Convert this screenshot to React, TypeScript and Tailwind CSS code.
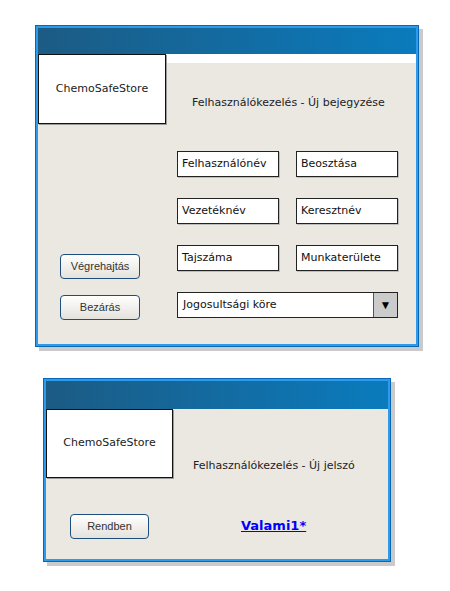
const sketch = { fontFamily: '"DejaVu Sans", "Liberation Sans", sans-serif' };
const ui = { fontFamily: '"Liberation Sans", Arial, sans-serif' };

function TitleBar({ h }: { h: string }) {
  return <div className={`${h} bg-[linear-gradient(90deg,#1c5b84,#0a7bbd)]`} />;
}

function Logo({ w, h }: { w: string; h: string }) {
  return (
    <div
      className={`${w} ${h} shrink-0 bg-white border border-[#111] shadow-[1px_1px_0_#9a9a9a] flex items-center justify-center text-[11px] text-[#222]`}
      style={sketch}>
      ChemoSafeStore
    </div>
  );
}

function Field({ label }: { label: string }) {
  return (
    <div
      className="h-[26px] bg-white border border-[#222] shadow-[1px_1px_0_#bdbdbd] flex items-center pl-[4px] text-[11px] text-[#111]"
      style={sketch}>
      {label}
    </div>
  );
}

function Button({ label, w }: { label: string; w: string }) {
  return (
    <button
      type="button"
      className={`${w} h-[25px] rounded-[4px] border border-[#1d4e7e] bg-[linear-gradient(#ffffff,#e4e2dc)] text-[11px] text-[#333]`}
      style={ui}>
      {label}
    </button>
  );
}

export default function App() {
  return (
    <div className="w-[450px] h-[591px] bg-white pt-[25px]">
      {/* uj bejegyzes */}
      <div className="ml-[35px] w-[384px] h-[322px] border border-[#0b66b6] shadow-[4px_4px_0_#cacaca]">
        <div className="h-full border-2 border-[#2d9bec] flex flex-col">
          <TitleBar h="h-[26px]" />
          <div className="flex-1 flex bg-[linear-gradient(#ffffff_0,#ffffff_9px,#ebe8e2_9px)]">
            <div className="w-[128px] flex flex-col">
              <Logo w="w-[128px]" h="h-[70px]" />
              <div className="ml-[22px] mt-[130px] flex flex-col gap-[16px]">
                <Button label="Végrehajtás" w="w-[80px]" />
                <Button label="Bezárás" w="w-[80px]" />
              </div>
            </div>
            <div className="ml-[11px] pt-[42px] flex flex-col">
              <div className="ml-[15px] h-[14px] leading-[14px] text-[11px] text-[#222]" style={sketch}>
                Felhasználókezelés - Új bejegyzése
              </div>
              <div className="mt-[41px] grid grid-cols-[102px_102px] gap-x-[17px] gap-y-[21px]">
                <Field label="Felhasználónév" />
                <Field label="Beosztása" />
                <Field label="Vezetéknév" />
                <Field label="Keresztnév" />
                <Field label="Tajszáma" />
                <Field label="Munkaterülete" />
                <div className="col-span-2 h-[26px] bg-white border border-[#222] flex items-stretch">
                  <div className="flex-1 flex items-center pl-[5px] text-[11px] text-[#111]" style={sketch}>
                    Jogosultsági köre
                  </div>
                  <div className="w-[24px] bg-[#cbcbcb] border-l border-[#555] flex items-center justify-center text-[12px] text-black">
                    ▼
                  </div>
                </div>
              </div>
            </div>
          </div>
        </div>
      </div>

      {/* uj jelszo */}
      <div className="ml-[43px] mt-[31px] w-[348px] h-[184px] border border-[#0b66b6] shadow-[4px_4px_0_#cacaca]">
        <div className="h-full border-2 border-[#2d9bec] flex flex-col">
          <TitleBar h="h-[28px]" />
          <div className="flex-1 flex flex-col bg-[#ebe8e2]">
            <div className="flex items-start">
              <Logo w="w-[127px]" h="h-[69px]" />
              <div className="ml-[20px] mt-[50px] h-[14px] leading-[14px] text-[11px] text-[#222]" style={sketch}>
                Felhasználókezelés - Új jelszó
              </div>
            </div>
            <div className="mt-[34px] flex items-center">
              <div className="ml-[24px]">
                <Button label="Rendben" w="w-[79px]" />
              </div>
              <a href="#" className="ml-[92px] text-[13px] font-bold text-[#0000ff] underline" style={sketch}>
                Valami1*
              </a>
            </div>
          </div>
        </div>
      </div>
    </div>
  );
}
